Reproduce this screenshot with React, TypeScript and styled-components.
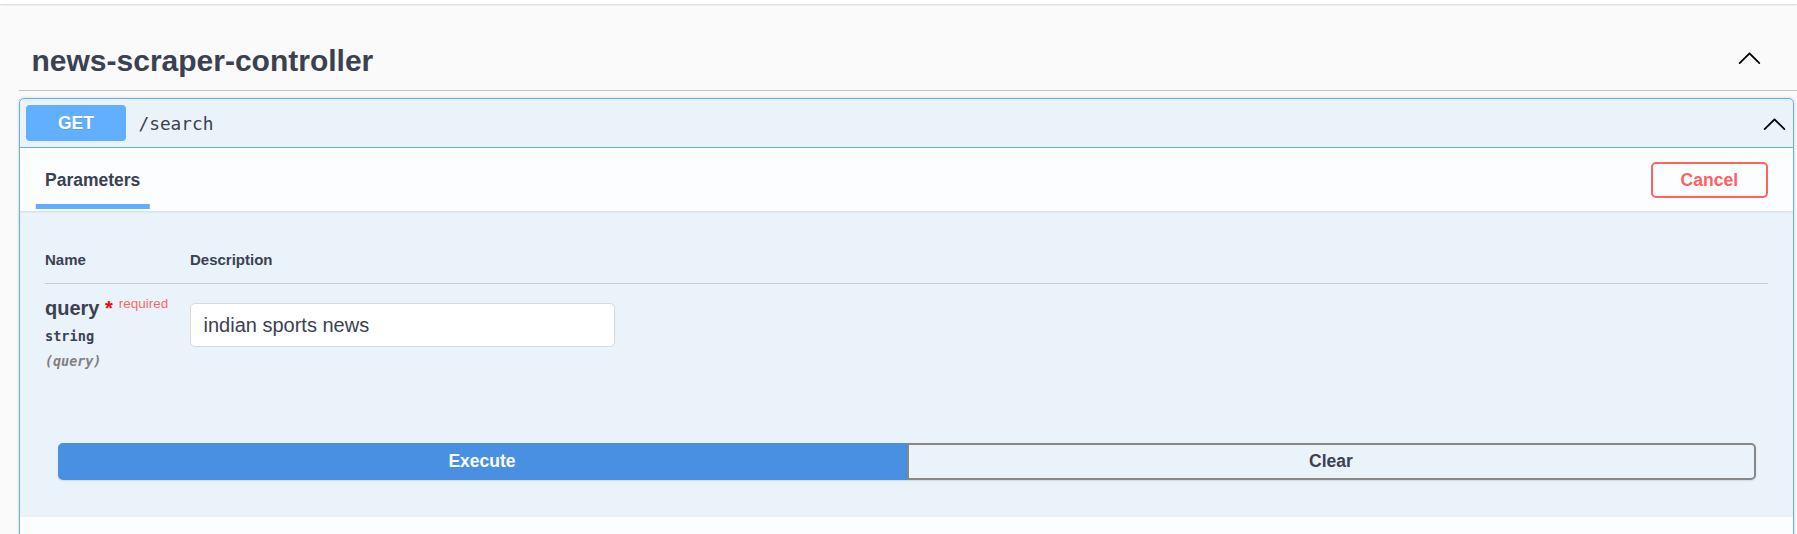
import React from "react";
import styled, { createGlobalStyle } from "styled-components";

const GlobalStyle = createGlobalStyle`
  html, body {
    margin: 0;
    padding: 0;
    overflow: hidden;
    background: #fafafa;
    font-family: "Liberation Sans", Arial, sans-serif;
    color: #3b4151;
  }
  * {
    box-sizing: border-box;
  }
`;

function Chevron() {
  return (
    <svg width="25" height="25" viewBox="0 0 20 20" aria-hidden="true">
      <path
        d="M17.418 14.908c.272.268.709.268.979 0s.271-.701 0-.969l-7.908-7.83c-.27-.268-.707-.268-.979 0l-7.908 7.83c-.27.268-.27.701 0 .969.271.268.709.268.979 0L10 7.767l7.418 7.141z"
        fill="#000"
      />
    </svg>
  );
}

export default function App() {
  return (
    <>
      <GlobalStyle />
      <TopBar />
      <Page>
        <TagHeader>
          <TagTitle>news-scraper-controller</TagTitle>
          <ArrowButton>
            <Chevron />
          </ArrowButton>
        </TagHeader>
        <Opblock>
          <Summary>
            <Method>GET</Method>
            <Path>/search</Path>
            <SummaryArrow>
              <Chevron />
            </SummaryArrow>
          </Summary>
          <SectionHeader>
            <TabTitle>
              <TabLabel $active>Parameters</TabLabel>
            </TabTitle>
            <CancelButton>Cancel</CancelButton>
          </SectionHeader>
          <ParamsBody>
            <HeadRow>
              <HeadCell>Name</HeadCell>
              <HeadCell>Description</HeadCell>
            </HeadRow>
            <ParamRow>
              <NameCell>
                <ParamName>
                  query<Star>&nbsp;*</Star>
                  <Required>required</Required>
                </ParamName>
                <ParamType>string</ParamType>
                <ParamIn>(query)</ParamIn>
              </NameCell>
              <DescCell>
                <TextInput defaultValue="indian sports news" />
              </DescCell>
            </ParamRow>
          </ParamsBody>
          <ButtonGroup>
            <ActionButton $variant="execute">Execute</ActionButton>
            <ActionButton $variant="clear">Clear</ActionButton>
          </ButtonGroup>
          <SectionHeader />
        </Opblock>
      </Page>
    </>
  );
}

const TopBar = styled.div`
  height: 4px;
  background: #fff;
  box-shadow: 0 1px 2px 0 rgba(0, 0, 0, 0.15);
`;

const Page = styled.div`
  padding: 27px 0 0 19px;
`;

const TagHeader = styled.div`
  display: flex;
  align-items: center;
  padding: 12.5px 25px 12.5px 12.5px;
  border-bottom: 1px solid rgba(59, 65, 81, 0.3);
`;

const TagTitle = styled.h3`
  flex: 1;
  margin: 0;
  font-size: 30px;
  line-height: 34px;
  font-weight: 700;
  color: #3b4151;
`;

const ArrowButton = styled.button`
  display: flex;
  align-items: center;
  padding: 0 10px;
  margin-bottom: 6px;
  border: none;
  background: none;
`;

const Opblock = styled.div`
  margin: 7px 3px 0 0;
  border: 1px solid #61affe;
  border-radius: 5px;
  background: rgba(97, 175, 254, 0.1);
  box-shadow: 0 0 3px rgba(0, 0, 0, 0.19);
  overflow: hidden;
`;

const Summary = styled.div`
  display: flex;
  align-items: center;
  padding: 6px;
  border-bottom: 1px solid #61affe;
`;

const Method = styled.span`
  min-width: 100px;
  height: 36px;
  display: flex;
  align-items: center;
  justify-content: center;
  border-radius: 4px;
  background: #61affe;
  color: #fff;
  font-size: 17.5px;
  font-weight: 700;
  text-shadow: 0 1px 0 rgba(0, 0, 0, 0.1);
`;

const Path = styled.span`
  flex: 1;
  padding: 0 12.5px;
  font-family: "DejaVu Sans Mono", "Liberation Mono", monospace;
  font-size: 17.8px;
  color: #3b4151;
`;

const SummaryArrow = styled.span`
  display: flex;
  align-items: center;
`;

const SectionHeader = styled.div`
  display: flex;
  align-items: center;
  min-height: 63px;
  padding: 10px 25px;
  background: rgba(255, 255, 255, 0.8);
  box-shadow: 0 1px 2px rgba(0, 0, 0, 0.1);
`;

const TabTitle = styled.h4`
  flex: 1;
  margin: 0;
  font-size: 17.5px;
  line-height: 20px;
  font-weight: 700;
  color: #3b4151;
`;

const TabLabel = styled.span<{ $active?: boolean }>`
  position: relative;
  display: inline-block;
  &::after {
    content: "";
    display: ${(p) => (p.$active ? "block" : "none")};
    position: absolute;
    left: 50%;
    bottom: -19px;
    width: 120%;
    height: 5px;
    transform: translateX(-50%);
    background: #61affe;
  }
`;

const CancelButton = styled.button`
  padding: 6px 28px;
  border: 2px solid #ff6060;
  border-radius: 5px;
  background: transparent;
  color: #ff6060;
  font-family: "Liberation Sans", Arial, sans-serif;
  font-size: 17.5px;
  line-height: 20px;
  font-weight: 700;
`;

const ParamsBody = styled.div`
  padding: 25px 25px 0;
`;

const HeadRow = styled.div`
  display: grid;
  grid-template-columns: 145px 1fr;
  border-bottom: 1px solid rgba(59, 65, 81, 0.2);
`;

const HeadCell = styled.div`
  padding: 15px 0;
  font-size: 15px;
  line-height: 17px;
  font-weight: 700;
  color: #3b4151;
`;

const ParamRow = styled.div`
  display: grid;
  grid-template-columns: 145px 1fr;
`;

const NameCell = styled.div`
  padding: 12.5px 12.5px 0 0;
`;

const ParamName = styled.div`
  font-size: 20px;
  line-height: 23px;
  font-weight: 700;
  color: #3b4151;
  white-space: nowrap;
`;

const Star = styled.span`
  color: red;
`;

const Required = styled.span`
  position: relative;
  top: -7px;
  padding-left: 6px;
  font-size: 13.5px;
  font-weight: 400;
  color: rgba(255, 0, 0, 0.6);
`;

const ParamType = styled.div`
  padding: 6px 0;
  font-family: "DejaVu Sans Mono", "Liberation Mono", monospace;
  font-size: 13.6px;
  line-height: 17px;
  font-weight: 700;
  color: #3b4151;
`;

const ParamIn = styled.div`
  padding-top: 2px;
  font-family: "DejaVu Sans Mono", "Liberation Mono", monospace;
  font-size: 13.4px;
  line-height: 17px;
  font-style: italic;
  font-weight: 700;
  color: #808080;
`;

const DescCell = styled.div`
  padding: 12.5px 12.5px 0 0;
`;

const TextInput = styled.input`
  display: block;
  width: 425px;
  margin: 6px 0;
  padding: 10px 12.5px;
  border: 1px solid #d9d9d9;
  border-radius: 5px;
  background: #fff;
  font-family: "Liberation Sans", Arial, sans-serif;
  font-size: 20px;
  line-height: 22px;
  color: #3b4151;
  outline: none;
`;

const ButtonGroup = styled.div`
  display: flex;
  padding: 73px 37.5px 37.5px;
`;

const ActionButton = styled.button<{ $variant: "execute" | "clear" }>`
  flex: 1;
  padding: 6px 0;
  border: 2px solid ${(p) => (p.$variant === "execute" ? "#4990e2" : "#888")};
  border-radius: ${(p) => (p.$variant === "execute" ? "5px 0 0 5px" : "0 5px 5px 0")};
  background: ${(p) => (p.$variant === "execute" ? "#4990e2" : "transparent")};
  color: ${(p) => (p.$variant === "execute" ? "#fff" : "#3b4151")};
  box-shadow: 0 1px 2px rgba(0, 0, 0, 0.1);
  font-family: "Liberation Sans", Arial, sans-serif;
  font-size: 17.5px;
  line-height: 21px;
  font-weight: 700;
`;
